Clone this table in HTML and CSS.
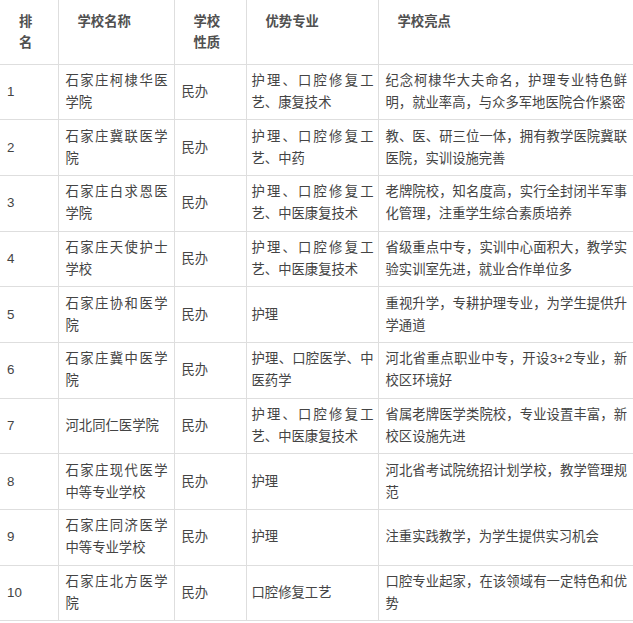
FILE: index.html
```html
<!DOCTYPE html>
<html lang="zh-CN">
<head>
<meta charset="utf-8">
<title>石家庄医学院校排名</title>
<link rel="stylesheet" href="styles.css">
</head>
<body>
<table class="rank-table">
  <colgroup>
    <col class="c-rank">
    <col class="c-name">
    <col class="c-type">
    <col class="c-major">
    <col class="c-note">
  </colgroup>
  <thead>
    <tr>
      <th>排<br>名</th>
      <th>学校名称</th>
      <th>学校<br>性质</th>
      <th>优势专业</th>
      <th>学校亮点</th>
    </tr>
  </thead>
  <tbody>
    <tr><td>1</td><td>石家庄柯棣华医学院</td><td>民办</td><td>护理、口腔修复工艺、康复技术</td><td>纪念柯棣华大夫命名，护理专业特色鲜明，就业率高，与众多军地医院合作紧密</td></tr>
    <tr><td>2</td><td>石家庄冀联医学院</td><td>民办</td><td>护理、口腔修复工艺、中药</td><td>教、医、研三位一体，拥有教学医院冀联医院，实训设施完善</td></tr>
    <tr><td>3</td><td>石家庄白求恩医学院</td><td>民办</td><td>护理、口腔修复工艺、中医康复技术</td><td>老牌院校，知名度高，实行全封闭半军事化管理，注重学生综合素质培养</td></tr>
    <tr><td>4</td><td>石家庄天使护士学校</td><td>民办</td><td>护理、口腔修复工艺、中医康复技术</td><td>省级重点中专，实训中心面积大，教学实验实训室先进，就业合作单位多</td></tr>
    <tr><td>5</td><td>石家庄协和医学院</td><td>民办</td><td>护理</td><td>重视升学，专耕护理专业，为学生提供升学通道</td></tr>
    <tr><td>6</td><td>石家庄冀中医学院</td><td>民办</td><td>护理、口腔医学、中医药学</td><td>河北省重点职业中专，开设3+2专业，新校区环境好</td></tr>
    <tr><td>7</td><td>河北同仁医学院</td><td>民办</td><td>护理、口腔修复工艺、中医康复技术</td><td>省属老牌医学类院校，专业设置丰富，新校区设施先进</td></tr>
    <tr><td>8</td><td>石家庄现代医学中等专业学校</td><td>民办</td><td>护理</td><td>河北省考试院统招计划学校，教学管理规范</td></tr>
    <tr><td>9</td><td>石家庄同济医学中等专业学校</td><td>民办</td><td>护理</td><td>注重实践教学，为学生提供实习机会</td></tr>
    <tr><td>10</td><td>石家庄北方医学院</td><td>民办</td><td>口腔修复工艺</td><td>口腔专业起家，在该领域有一定特色和优势</td></tr>
  </tbody>
</table>
</body>
</html>
```

FILE: styles.css
```css
html, body {
  margin: 0;
  padding: 0;
  background: #ffffff;
}

.rank-table {
  width: 633px;
  table-layout: fixed;
  border-collapse: collapse;
  font-family: "Liberation Sans", "Noto Sans CJK SC", sans-serif;
  font-size: 13.33px;
  color: #444444;
}

.c-rank { width: 58px; }
.c-name { width: 116px; }
.c-type { width: 72px; }
.c-major { width: 132px; }
.c-note { width: 255px; }

.rank-table th,
.rank-table td {
  border: 1px solid #dedede;
  word-break: break-all;
}

.rank-table th:first-child,
.rank-table td:first-child {
  border-left: none;
}

.rank-table th:last-child,
.rank-table td:last-child {
  border-right: none;
}

.rank-table th {
  border-top: none;
  height: 64px;
  box-sizing: border-box;
  padding: 11px 6px 8px 19px;
  vertical-align: top;
  text-align: left;
  font-weight: bold;
  line-height: 21px;
  color: #505050;
}

.rank-table td {
  height: 55.7px;
  box-sizing: border-box;
  padding: 5px 6px 5px 7px;
  vertical-align: middle;
  text-align: justify;
  line-height: 22px;
}

.rank-table td:nth-child(4) {
  padding-left: 5px;
  padding-right: 4px;
}

.rank-table td:nth-child(5) {
  padding-left: 7px;
  padding-right: 6px;
}
```
